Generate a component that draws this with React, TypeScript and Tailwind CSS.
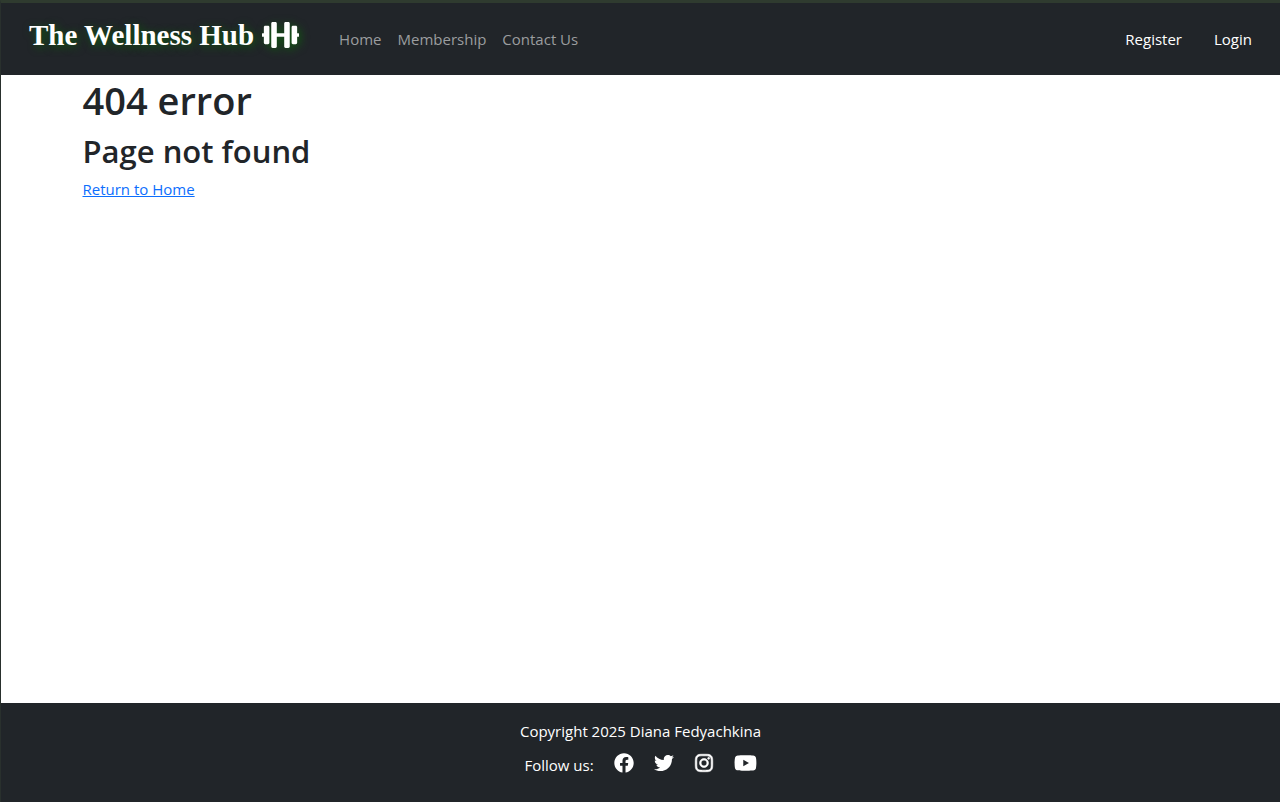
import React from "react";
import { FaDumbbell, FaFacebook, FaTwitter, FaInstagram, FaYoutube } from "react-icons/fa";

const navLinks = ["Home", "Membership", "Contact Us"];

const socialLinks = [
  { label: "Facebook", icon: <FaFacebook /> },
  { label: "Twitter", icon: <FaTwitter /> },
  { label: "Instagram", icon: <FaInstagram className="stroke-white stroke-[16px]" /> },
  { label: "YouTube", icon: <FaYoutube className="h-[22px] w-[23px]" /> },
];

function Header() {
  return (
    <header className="flex h-[72px] items-center bg-[#212529] px-7">
      <a
        href="#"
        className="mb-2 mr-10 flex items-center gap-2 whitespace-nowrap font-['Liberation_Serif',serif] text-[29px] font-bold leading-10 text-white [text-shadow:2px_2px_8px_#0f5a0f]"
      >
        The Wellness Hub
        <FaDumbbell className="h-[30px] w-[37px] [filter:drop-shadow(2px_2px_4px_#0f5a0f)]" />
      </a>
      <nav className="flex flex-1 items-center justify-between">
        <ul className="flex gap-4 text-[#9b9d9f]">
          {navLinks.map((link) => (
            <li key={link}>
              <a href="#">{link}</a>
            </li>
          ))}
        </ul>
        <ul className="flex gap-8 text-white">
          <li>
            <a href="#">Register</a>
          </li>
          <li>
            <a href="#">Login</a>
          </li>
        </ul>
      </nav>
    </header>
  );
}

function Footer() {
  return (
    <footer className="flex flex-col items-center bg-[#212529] pb-[23px] pt-4 text-white">
      <p className="leading-6">Copyright 2025 Diana Fedyachkina</p>
      <div className="mt-2 flex items-center">
        <span className="mr-5 leading-7">Follow us:</span>
        <ul className="mb-1 flex items-center gap-5 text-xl">
          {socialLinks.map(({ label, icon }) => (
            <li key={label}>
              <a href="#" aria-label={label}>
                {icon}
              </a>
            </li>
          ))}
        </ul>
      </div>
    </footer>
  );
}

export default function App() {
  return (
    <div className="flex min-h-screen flex-col border-l border-t-3 border-l-[#29302d] border-t-[#2f3b2f] bg-white font-['Open_Sans','Noto_Sans',sans-serif] text-[15px] leading-6 text-[#212529]">
      <Header />
      <main className="mx-auto w-full max-w-[1140px] flex-1 px-3">
        <h1 className="mb-1.5 text-[38px] font-semibold leading-[50px]">404 error</h1>
        <h2 className="mb-1.5 text-[31px] font-semibold leading-10">Page not found</h2>
        <a href="#" className="text-[#0d6efd] underline">
          Return to Home
        </a>
      </main>
      <Footer />
    </div>
  );
}
